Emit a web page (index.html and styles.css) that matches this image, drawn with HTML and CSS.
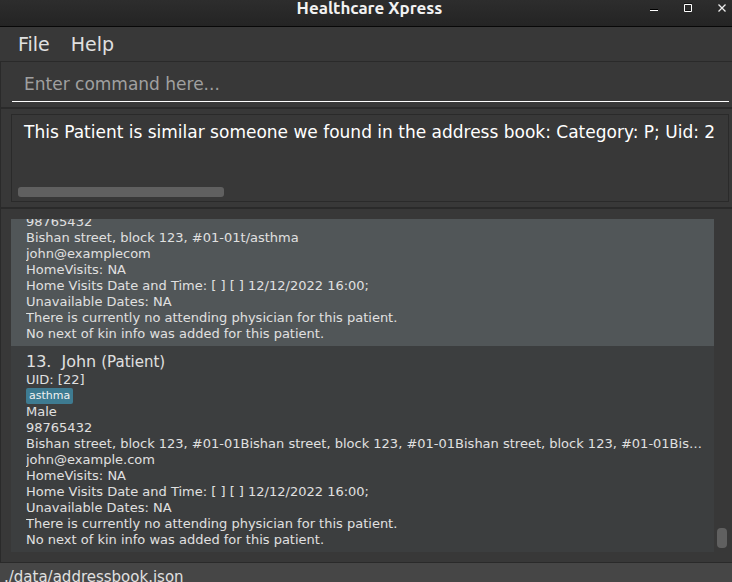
FILE: index.html
```html
<!DOCTYPE html>
<html lang="en">
<head>
<meta charset="utf-8">
<meta name="viewport" content="width=device-width, initial-scale=1">
<title>Healthcare Xpress</title>
<link rel="stylesheet" href="styles.css">
</head>
<body>
<header class="titlebar">
  <h1 class="title">Healthcare Xpress</h1>
  <div class="window-buttons">
    <button type="button" class="window-button" aria-label="Minimize"><svg width="10" height="10" viewBox="0 0 10 10"><path d="M1 6.500h8" stroke="#000"/><path d="M1 7.500h8" stroke="#fff"/></svg></button>
    <button type="button" class="window-button" aria-label="Maximize"><svg width="10" height="10" viewBox="0 0 10 10"><path d="M1 .5h8M2 7.500h6" stroke="#111"/><path d="M1.500 1.500h7v7h-7z" fill="none" stroke="#fff"/></svg></button>
    <button type="button" class="window-button" aria-label="Close"><svg width="10" height="10" viewBox="0 0 10 10"><path d="M1.500 1.500l7 7M8.500 1.500l-7 7" stroke="#eee" stroke-width="1.300"/></svg></button>
  </div>
</header>
<nav class="menubar">
  <button type="button" class="menu">File</button>
  <button type="button" class="menu">Help</button>
</nav>
<form class="command">
  <input class="command-input" type="text" aria-label="Command" placeholder="Enter command here...">
</form>
<section class="result">
  <div class="result-box">
    <p class="result-text">This Patient is similar someone we found in the address book: Category: P; Uid: 2</p>
    <div class="result-thumb"></div>
  </div>
</section>
<main class="patients">
  <div class="patient-list">
    <article class="card selected">
      <p>98765432</p>
      <p>Bishan street, block 123, #01-01t/asthma</p>
      <p>john@examplecom</p>
      <p>HomeVisits: NA</p>
      <p>Home Visits Date and Time: [ ] [ ] 12/12/2022 16:00;</p>
      <p>Unavailable Dates: NA</p>
      <p>There is currently no attending physician for this patient.</p>
      <p>No next of kin info was added for this patient.</p>
    </article>
    <article class="card">
      <h2 class="name"><span>13.</span><span>John</span><span class="category">(Patient)</span></h2>
      <p>UID: [22]</p>
      <p class="tags"><span class="tag">asthma</span></p>
      <p>Male</p>
      <p>98765432</p>
      <p>Bishan street, block 123, #01-01Bishan street, block 123, #01-01Bishan street, block 123, #01-01Bishan street, block 123, #01-01</p>
      <p>john@example.com</p>
      <p>HomeVisits: NA</p>
      <p>Home Visits Date and Time: [ ] [ ] 12/12/2022 16:00;</p>
      <p>Unavailable Dates: NA</p>
      <p>There is currently no attending physician for this patient.</p>
      <p>No next of kin info was added for this patient.</p>
    </article>
  </div>
  <div class="list-track"><div class="list-thumb"></div></div>
</main>
<footer class="status">./data/addressbook.json</footer>
</body>
</html>
```
FILE: styles.css
```css
* {
  box-sizing: border-box;
}

body {
  display: flex;
  flex-direction: column;
  height: 100vh;
  margin: 0;
  overflow: hidden;
  background: #383838;
  color: #e0e0e0;
  font-family: "DejaVu Sans", sans-serif;
  font-size: 13px;
  line-height: 16px;
}

h1, h2, p {
  margin: 0;
  font-weight: normal;
}

button {
  padding: 0;
  border: 0;
  background: none;
  color: inherit;
  font: inherit;
}

.titlebar {
  display: grid;
  grid-template-columns: 1fr auto 1fr;
  align-items: start;
  flex: none;
  height: 27px;
  padding: 0 5px 0 12px;
  border-bottom: 1px solid #080808;
  background: linear-gradient(#2d2d2d, #242424);
}

.title {
  grid-column: 2;
  color: #f2f2f2;
  font-family: Ubuntu, "Noto Sans", sans-serif;
  font-size: 17px;
  font-weight: bold;
}

.window-buttons {
  display: flex;
  justify-content: flex-end;
  gap: 24px;
  padding-top: 3px;
}

.window-button {
  display: flex;
}

.menubar {
  display: flex;
  flex: none;
  gap: 21px;
  height: 34px;
  padding: 0 18px;
  font-size: 19px;
}

.command {
  flex: none;
  padding: 7px 3px 5px 11px;
  border: 1px solid #2a2a2a;
  border-width: 1px 0 1px 1px;
}

.command-input {
  display: block;
  width: 100%;
  height: 33px;
  padding: 0 12px 2px;
  border: 0;
  border-bottom: 1px solid #fff;
  outline: 0;
  background: none;
  color: #fff;
  font: 17px "DejaVu Sans", sans-serif;
}

.command-input::placeholder {
  color: #a0a0a0;
}

.result {
  flex: none;
  padding: 5px 3px 5px 10px;
  border: 1px solid #2a2a2a;
  border-width: 1px 0 1px 1px;
}

.result-box {
  display: flex;
  flex-direction: column;
  justify-content: space-between;
  height: 88px;
  padding: 7px 1px 4px 6px;
  border: 1px solid #2a2a2a;
}

.result-text {
  padding-left: 6px;
  overflow: hidden;
  color: #fff;
  font-size: 17px;
  line-height: 20px;
  white-space: nowrap;
}

.result-thumb {
  width: 29%;
  height: 10px;
  border-radius: 3px;
  background: #606060;
}

.patients {
  display: flex;
  flex: 1;
  min-height: 0;
  padding: 10px 5px 10px 10px;
  border: 1px solid #2a2a2a;
  border-width: 1px 0 0 1px;
}

.patient-list {
  display: flex;
  flex: 1;
  flex-direction: column;
  justify-content: flex-end;
  min-width: 0;
  overflow: hidden;
}

.card {
  flex: none;
  padding: 6px 12px 4px 15px;
  background: #3c3e3f;
}

.card.selected {
  background: #515658;
}

.card p {
  overflow: hidden;
  text-overflow: ellipsis;
  white-space: nowrap;
}

.name {
  display: flex;
  gap: 10px;
  font-size: 16px;
  line-height: 20px;
}

.category {
  margin-left: -5px;
  font-size: 15px;
}

.card .tags {
  display: flex;
}

.tag {
  padding: 0 3px;
  border-radius: 2px;
  background: #3e7b91;
  color: #f0f0f0;
  font-size: 11px;
}

.list-track {
  display: flex;
  flex: none;
  align-items: flex-end;
  width: 13px;
  padding: 0 0 4px 3px;
}

.list-thumb {
  width: 10px;
  height: 20px;
  border-radius: 4px;
  background: #606060;
}

.status {
  flex: none;
  height: 20px;
  padding: 4px 4px 0;
  overflow: hidden;
  border-top: 1px solid #2a2a2a;
  background: #464646;
  font-size: 15px;
  line-height: 20px;
}
```
